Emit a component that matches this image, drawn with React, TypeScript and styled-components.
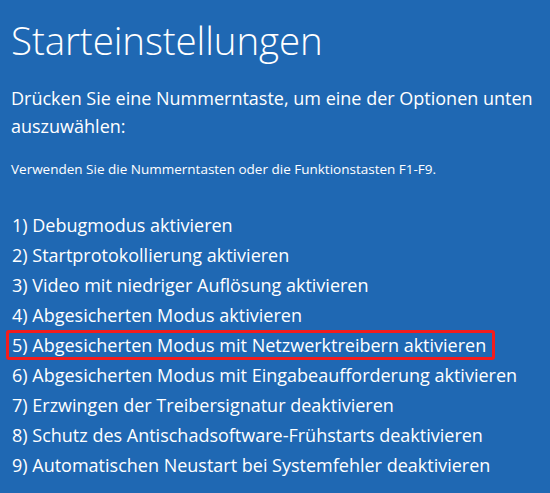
import React from 'react';
import styled, { createGlobalStyle } from 'styled-components';

const GlobalStyle = createGlobalStyle`
  html, body {
    margin: 0;
    padding: 0;
    background: #1f68b3;
  }
`;

const options = [
  'Debugmodus aktivieren',
  'Startprotokollierung aktivieren',
  'Video mit niedriger Auflösung aktivieren',
  'Abgesicherten Modus aktivieren',
  'Abgesicherten Modus mit Netzwerktreibern aktivieren',
  'Abgesicherten Modus mit Eingabeaufforderung aktivieren',
  'Erzwingen der Treibersignatur deaktivieren',
  'Schutz des Antischadsoftware-Frühstarts deaktivieren',
  'Automatischen Neustart bei Systemfehler deaktivieren',
];

const App = () => {
  return (
    <>
      <GlobalStyle />
      <Screen>
        <Title>Starteinstellungen</Title>
        <Prompt>Drücken Sie eine Nummerntaste, um eine der Optionen unten auszuwählen:</Prompt>
        <Hint>Verwenden Sie die Nummerntasten oder die Funktionstasten F1-F9.</Hint>
        <OptionList>
          {options.map((text, i) => (
            <Option key={text} $selected={i === 4}>
              {i + 1}) {text}
            </Option>
          ))}
        </OptionList>
      </Screen>
    </>
  );
};

const Screen = styled.div`
  width: 550px;
  height: 493px;
  box-sizing: border-box;
  padding: 14px 8px 0 11px;
  background: #1f68b3;
  color: #ffffff;
  font-family: 'Open Sans', 'Noto Sans', sans-serif;
  overflow: hidden;
`;
const Title = styled.h1`
  margin: 0;
  font-size: 38.5px;
  font-weight: 300;
  line-height: 52px;
  letter-spacing: -0.1px;
`;
const Prompt = styled.p`
  margin: 18px 0 0 0;
  font-size: 18px;
  font-weight: 400;
  line-height: 28px;
`;
const Hint = styled.p`
  margin: 20px 0 0 0;
  font-size: 13.5px;
  line-height: 18px;
`;
const OptionList = styled.ul`
  list-style: none;
  margin: 32px 0 0 -5px;
  padding: 0;
  display: flex;
  flex-direction: column;
  align-items: flex-start;
`;
const Option = styled.li<{ $selected?: boolean }>`
  font-size: 18px;
  line-height: 30px;
  padding: 0 9px 0 6px;
  outline: ${(p) => (p.$selected ? '3px solid #f41c1c' : 'none')};
  outline-offset: -3px;
  border-radius: 3px;
`;

export default App;
